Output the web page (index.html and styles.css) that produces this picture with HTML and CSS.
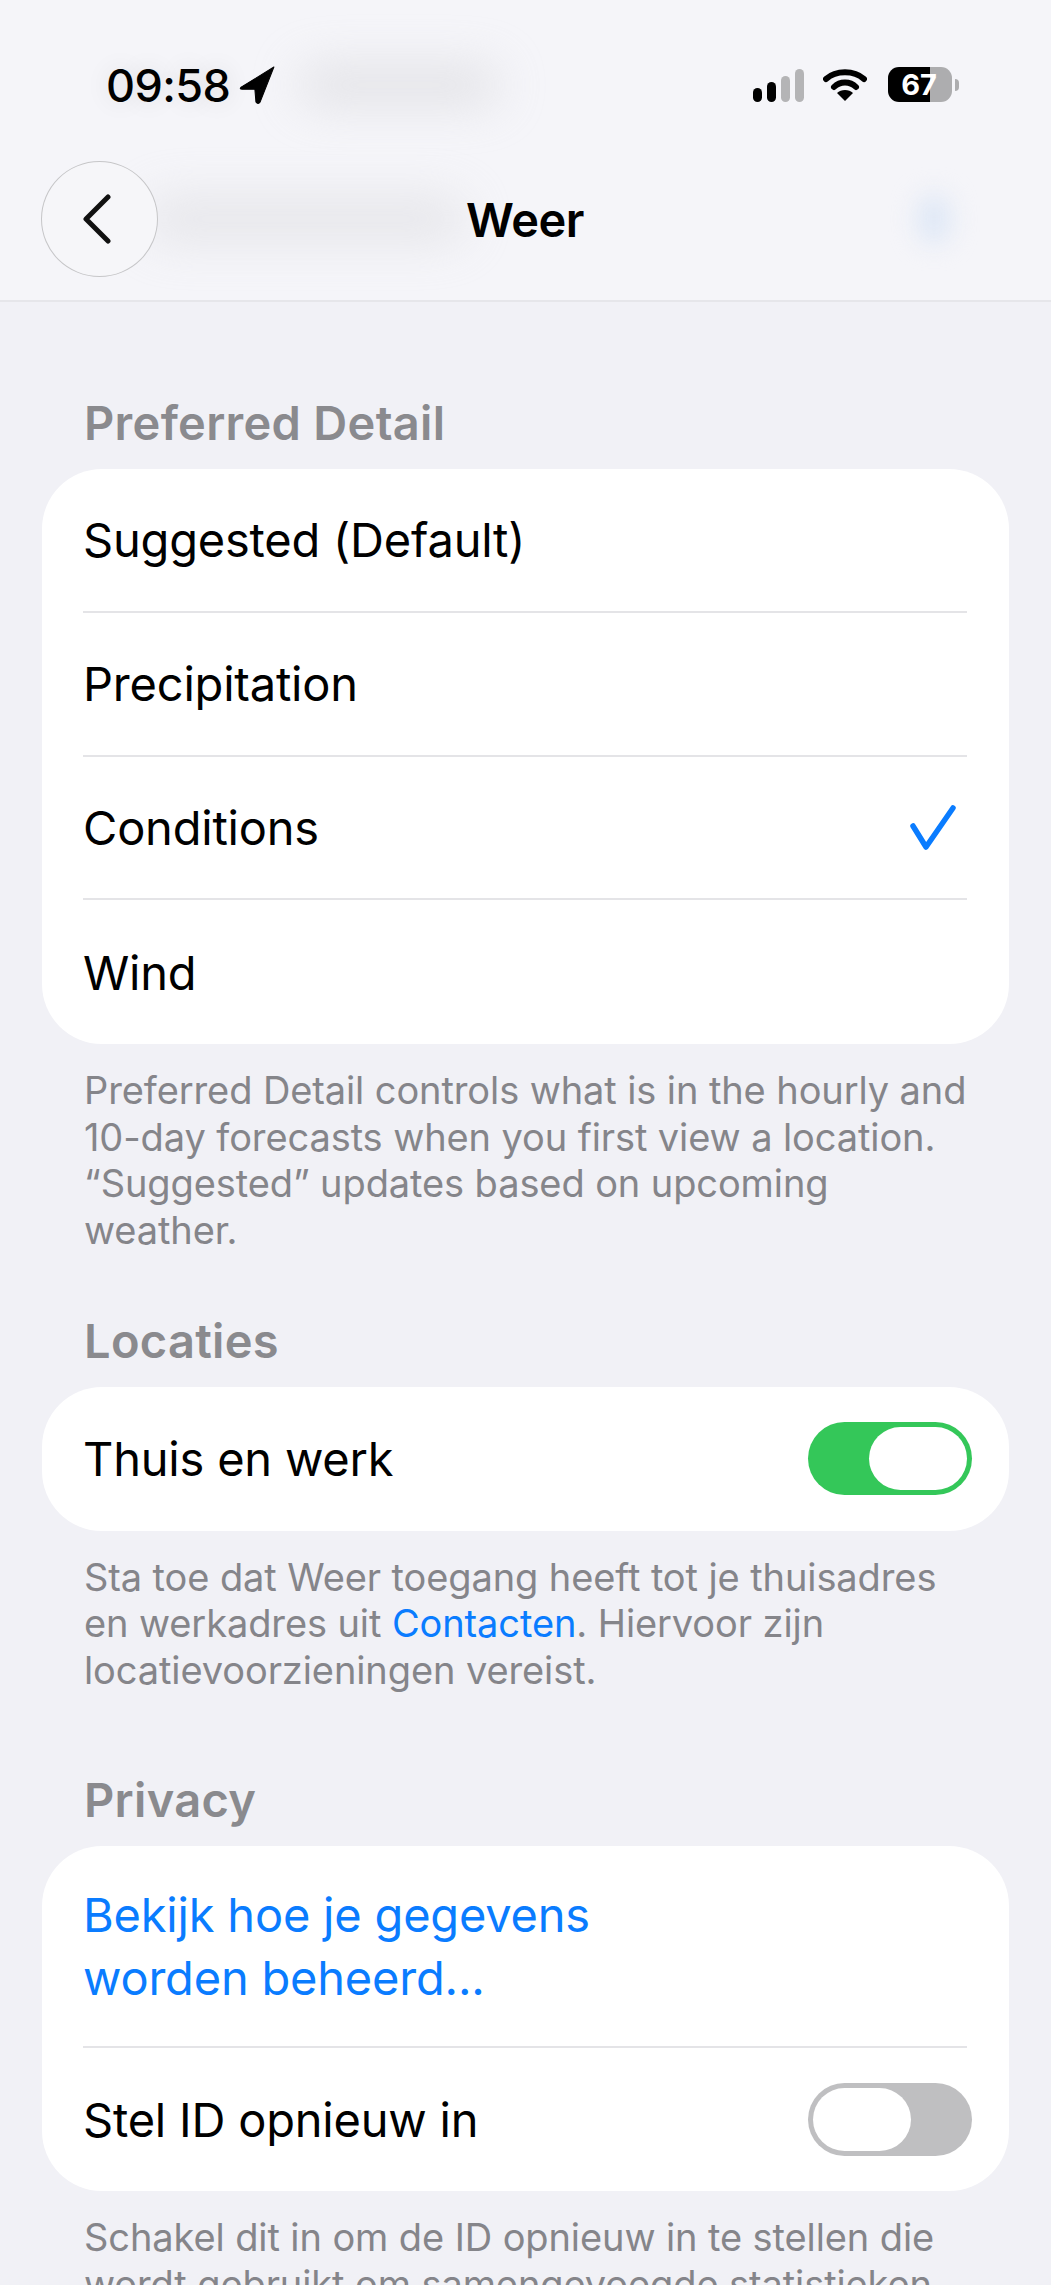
FILE: index.html
```html
<!DOCTYPE html>
<html lang="nl">
<head>
    <meta charset="UTF-8">
    <meta name="viewport" content="width=device-width, initial-scale=1.0">
    <title>Weer</title>
    <link rel="stylesheet" href="styles.css">
</head>
<body>
    <header class="top">
        <div class="status">
            <div class="status-left">
                <span class="time">09:58</span>
                <svg class="arrow" width="36" height="38" viewBox="0 0 34 36"><path d="M33 1 L2 20 Q0 22 3 22 L15 22 L16 34 Q18 37 20 34 Z" fill="#000" stroke="#000" stroke-width="1" stroke-linejoin="round"/></svg>
                <div class="smudge smudge-status"></div>
            </div>
            <div class="status-right">
                <div class="signal">
                    <span class="bar bar-1"></span>
                    <span class="bar bar-2"></span>
                    <span class="bar bar-3"></span>
                    <span class="bar bar-4"></span>
                </div>
                <svg class="wifi" width="44" height="34" viewBox="0 0 44 34">
                    <path d="M3 11 C13 2 31 2 41 11" fill="none" stroke="#000" stroke-width="6" stroke-linecap="round"/>
                    <path d="M11 19 C17 13 27 13 33 19" fill="none" stroke="#000" stroke-width="6" stroke-linecap="round"/>
                    <path d="M22 33 L14 25 C18 21 26 21 30 25 Z" fill="#000"/>
                </svg>
                <div class="battery"><span class="battery-level">67</span></div>
                <span class="battery-nub"></span>
            </div>
        </div>
        <nav class="nav">
            <div class="nav-left">
                <button class="back">
                    <svg width="30" height="50" viewBox="0 0 30 50"><path d="M26 3 L4 25 L26 47" fill="none" stroke="#111" stroke-width="5" stroke-linecap="round" stroke-linejoin="round"/></svg>
                </button>
                <div class="smudge smudge-nav"></div>
            </div>
            <h1 class="title">Weer</h1>
            <div class="nav-right"><div class="smudge smudge-check"></div></div>
        </nav>
    </header>

    <main>
        <h2 class="section-title first">Preferred Detail</h2>
        <section class="card">
            <div class="row">Suggested (Default)</div>
            <div class="row">Precipitation</div>
            <div class="row">
                Conditions
                <svg class="check" width="46" height="46" viewBox="0 0 46 46"><path d="M3 22 L16 43 L43 4" fill="none" stroke="#0a7cff" stroke-width="5.5" stroke-linecap="round" stroke-linejoin="round"/></svg>
            </div>
            <div class="row">Wind</div>
        </section>
        <p class="note">Preferred Detail controls what is in the hourly and 10-day forecasts when you first view a location. “Suggested” updates based on upcoming weather.</p>

        <h2 class="section-title">Locaties</h2>
        <section class="card">
            <div class="row">
                Thuis en werk
                <span class="switch on"><span class="knob"></span></span>
            </div>
        </section>
        <p class="note">Sta toe dat Weer toegang heeft tot je thuisadres en werkadres uit <a href="#">Contacten</a>. Hiervoor zijn locatievoorzieningen vereist.</p>

        <h2 class="section-title wide-gap">Privacy</h2>
        <section class="card">
            <div class="row row-link"><a href="#">Bekijk hoe je gegevens<br>worden beheerd...</a></div>
            <div class="row">
                Stel ID opnieuw in
                <span class="switch"><span class="knob"></span></span>
            </div>
        </section>
        <p class="note">Schakel dit in om de ID opnieuw in te stellen die wordt gebruikt om samengevoegde statistieken</p>
    </main>
</body>
</html>
```

FILE: styles.css
```css
* {
    margin: 0;
    padding: 0;
    box-sizing: border-box;
}
html, body {
    height: 2285px;
    overflow: hidden;
}
body {
    background: #f1f1f6;
    font-family: Inter, "Liberation Sans", sans-serif;
    color: #000;
}
a {
    color: #0a7cff;
    text-decoration: none;
}

/* status bar + nav */
.top {
    height: 302px;
    background: #f5f5f9;
    border-bottom: 2px solid #e6e6ea;
}
.status {
    height: 146px;
    padding: 67px 92px 0 106px;
    display: flex;
    justify-content: space-between;
    align-items: flex-start;
}
.status-left {
    display: flex;
    align-items: center;
    height: 36px;
}
.time {
    font-size: 45px;
    font-weight: 500;
    letter-spacing: -0.6px;
    text-shadow: 0 0 24px rgba(0, 0, 0, 0.12);
}
.arrow {
    margin-left: 9px;
    flex-shrink: 0;
}
.smudge {
    background: #d2d2d6;
    filter: blur(24px);
    border-radius: 20px;
}
.smudge-status {
    width: 200px;
    height: 36px;
    margin-left: 24px;
    opacity: 0.6;
}
.status-right {
    display: flex;
    align-items: flex-start;
    height: 36px;
}
.signal {
    display: flex;
    align-items: flex-end;
    gap: 5px;
    height: 34px;
    margin-top: 1px;
}
.bar {
    width: 9px;
    border-radius: 5px;
    background: #b4b4b6;
}
.bar-1 { height: 14px; background: #000; }
.bar-2 { height: 20px; background: #000; }
.bar-3 { height: 26px; }
.bar-4 { height: 33px; }
.wifi {
    margin: 1px 0 0 19px;
}
.battery {
    width: 64px;
    height: 35px;
    margin-left: 21px;
    border-radius: 11px;
    background: linear-gradient(90deg, #000 42px, #adadaf 42px);
    color: #fff;
    font-size: 29px;
    font-weight: 700;
    line-height: 35px;
    text-align: center;
}
.battery-level {
    position: relative;
    left: -1px;
}
.battery-nub {
    width: 4px;
    height: 12px;
    margin: 12px 0 0 3px;
    border-radius: 0 4px 4px 0;
    background: #adadaf;
}
.nav {
    height: 116px;
    margin-top: 15px;
    padding: 0 42px 0 41px;
    display: grid;
    grid-template-columns: 1fr auto 1fr;
    align-items: center;
}
.nav-left {
    display: flex;
    align-items: center;
}
.back {
    width: 117px;
    height: 116px;
    border-radius: 50%;
    border: 1px solid #c6c6c8;
    background: #f6f6f9;
    display: flex;
    align-items: center;
    justify-content: center;
    padding-right: 5px;
    flex-shrink: 0;
    position: relative;
    z-index: 1;
}
.smudge-nav {
    width: 320px;
    height: 44px;
    margin-left: -12px;
    opacity: 0.45;
}
.title {
    font-size: 47px;
    font-weight: 600;
    letter-spacing: -0.5px;
    position: relative;
}
.nav-right {
    display: flex;
    justify-content: flex-end;
    padding-right: 58px;
}
.smudge-check {
    width: 34px;
    height: 50px;
    background: #dfe8f6;
    filter: blur(12px);
}

/* sections */
.section-title {
    margin: 56px 0 0 84px;
    height: 77px;
    font-size: 47px;
    font-weight: 600;
    line-height: 62px;
    letter-spacing: 0.3px;
    color: #8a8a8e;
}
.section-title.first {
    margin-top: 90px;
}
.section-title.wide-gap {
    margin-top: 75px;
}
.card {
    margin: 0 42px;
    padding: 0 42px 0 41px;
    background: #fff;
    border-radius: 60px;
}
.row {
    height: 143.75px;
    display: flex;
    align-items: center;
    justify-content: space-between;
    font-size: 47px;
    letter-spacing: -0.2px;
    border-bottom: 2px solid #e4e4e7;
}
.row:last-child {
    border-bottom: 0;
}
.row-link {
    height: 202px;
    line-height: 63px;
}
.check {
    margin-right: 11px;
}
.note {
    margin: 0 80px 0 84px;
    padding-top: 23px;
    font-size: 38px;
    line-height: 46.7px;
    letter-spacing: -0.1px;
    color: #85858a;
}

/* toggles */
.switch {
    width: 164px;
    height: 73px;
    margin-right: -5px;
    padding: 5px;
    border-radius: 37px;
    background: #bfbfc1;
    display: flex;
}
.switch.on {
    background: #34c759;
    justify-content: flex-end;
}
.knob {
    width: 98px;
    height: 63px;
    border-radius: 32px;
    background: #fff;
}
```
